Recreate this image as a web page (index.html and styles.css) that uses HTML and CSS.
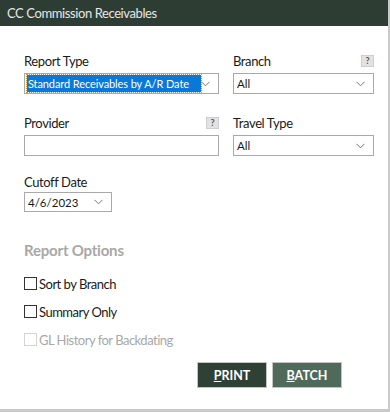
FILE: index.html
```html
<!DOCTYPE html>
<html lang="en">

<head>
    <meta charset="UTF-8">
    <meta name="viewport" content="width=device-width, initial-scale=1.0">
    <title>CC Commission Receivables</title>
    <link rel="stylesheet" href="styles.css">
</head>

<body>
<div class="window">
    <div class="title-bar">CC Commission Receivables</div>

    <div class="content">
        <div class="field-grid">
            <!-- Report Type -->
            <div class="field">
                <div class="label-row"><span class="label">Report Type</span></div>
                <div class="dropdown">
                    <span class="dropdown-value selected">Standard Receivables by A/R Date</span>
                    <svg class="chevron" width="9" height="6" viewBox="0 0 9 6"><polyline points="0.5,0.8 4.5,4.8 8.5,0.8" fill="none" stroke="#777" stroke-width="1"/></svg>
                </div>
            </div>

            <!-- Branch -->
            <div class="field">
                <div class="label-row"><span class="label">Branch</span><span class="help">?</span></div>
                <div class="dropdown">
                    <span class="dropdown-value">All</span>
                    <svg class="chevron" width="9" height="6" viewBox="0 0 9 6"><polyline points="0.5,0.8 4.5,4.8 8.5,0.8" fill="none" stroke="#777" stroke-width="1"/></svg>
                </div>
            </div>

            <!-- Provider -->
            <div class="field">
                <div class="label-row"><span class="label">Provider</span><span class="help">?</span></div>
                <div class="text-input"></div>
            </div>

            <!-- Travel Type -->
            <div class="field">
                <div class="label-row"><span class="label">Travel Type</span></div>
                <div class="dropdown">
                    <span class="dropdown-value">All</span>
                    <svg class="chevron" width="9" height="6" viewBox="0 0 9 6"><polyline points="0.5,0.8 4.5,4.8 8.5,0.8" fill="none" stroke="#777" stroke-width="1"/></svg>
                </div>
            </div>
        </div>

        <!-- Cutoff Date -->
        <div class="field date-field">
            <div class="label-row"><span class="label">Cutoff Date</span></div>
            <div class="dropdown date-dropdown">
                <span class="dropdown-value">4/6/2023</span>
                <svg class="chevron" width="9" height="6" viewBox="0 0 9 6"><polyline points="0.5,0.8 4.5,4.8 8.5,0.8" fill="none" stroke="#777" stroke-width="1"/></svg>
            </div>
        </div>

        <div class="section-title">Report Options</div>

        <div class="options">
            <div class="option"><span class="box"></span>Sort by Branch</div>
            <div class="option"><span class="box"></span>Summary Only</div>
            <div class="option disabled"><span class="box"></span>GL History for Backdating</div>
        </div>

        <div class="button-row">
            <button class="btn btn-print"><u>P</u>RINT</button>
            <button class="btn btn-batch"><u>B</u>ATCH</button>
        </div>
    </div>
</div>
</body>

</html>
```

FILE: styles.css
```css
* {
    box-sizing: border-box;
}

body {
    margin: 0;
    padding: 0;
    background: #ffffff;
    font-family: Lato, 'Noto Sans', sans-serif;
    color: #1a1a1a;
}

.window {
    width: 390px;
    height: 412px;
    border-right: 2px solid #c9c9c9;
    border-bottom: 3px solid #c9c9c9;
    background: #ffffff;
}

.title-bar {
    height: 26px;
    background-color: #2e3d33;
    color: #e6e6e6;
    font-size: 13px;
    letter-spacing: -0.4px;
    line-height: 26px;
    padding-left: 7px;
}

.content {
    padding: 24px 0 0 24px;
}

.field-grid {
    display: grid;
    grid-template-columns: 195px 141px;
    column-gap: 14px;
    row-gap: 18px;
}

.label-row {
    display: flex;
    justify-content: space-between;
    align-items: center;
    height: 22px;
    margin-bottom: 1px;
}

.label {
    font-size: 13px;
    letter-spacing: -0.4px;
}

.help {
    width: 13px;
    height: 12px;
    background: #e2e2e2;
    border: 1px solid #cfcfcf;
    font-size: 9px;
    font-weight: bold;
    line-height: 10px;
    text-align: center;
    color: #555;
}

.dropdown,
.text-input {
    height: 21px;
    border: 1px solid #a9a9a9;
    background: #ffffff;
    display: flex;
    align-items: center;
    justify-content: space-between;
    padding: 0 8px 0 2px;
}

.dropdown-value {
    font-size: 11.5px;
    padding: 0 1px;
    line-height: 15px;
    white-space: nowrap;
}

.dropdown-value.selected {
    background: #0a78d7;
    color: #ffffff;
    outline: 1px dotted #d88c2a;
    width: 176px;
    height: 17px;
    line-height: 17px;
    font-size: 11px;
    letter-spacing: -0.1px;
    overflow: hidden;
}

.chevron {
    flex-shrink: 0;
}

.date-field {
    margin-top: 16px;
    width: 88px;
}

.date-field .label-row {
    height: 20px;
    margin-bottom: 0;
}

.date-dropdown {
    height: 20px;
}

.section-title {
    margin-top: 29px;
    font-size: 15px;
    font-weight: bold;
    letter-spacing: -0.2px;
    color: #a8a8a8;
}

.options {
    margin-top: 16px;
    display: flex;
    flex-direction: column;
    gap: 11px;
}

.option {
    display: flex;
    align-items: center;
    font-size: 13px;
    letter-spacing: -0.5px;
    height: 17px;
}

.option .box {
    width: 13px;
    height: 13px;
    border: 1px solid #333;
    margin-right: 2px;
}

.option.disabled {
    color: #a8a8a8;
}

.option.disabled .box {
    border-color: #d4d4d4;
}

.button-row {
    display: flex;
    gap: 5px;
    margin-top: 14px;
    padding-left: 173px;
}

.btn {
    width: 70px;
    height: 26px;
    border: 1px solid #c4c4c4;
    color: #ffffff;
    font-family: Lato, 'Noto Sans', sans-serif;
    font-size: 12.5px;
    font-weight: bold;
    cursor: pointer;
}

.btn-print {
    background-color: #2f4135;
}

.btn-batch {
    background-color: #4f6a5b;
}
```
